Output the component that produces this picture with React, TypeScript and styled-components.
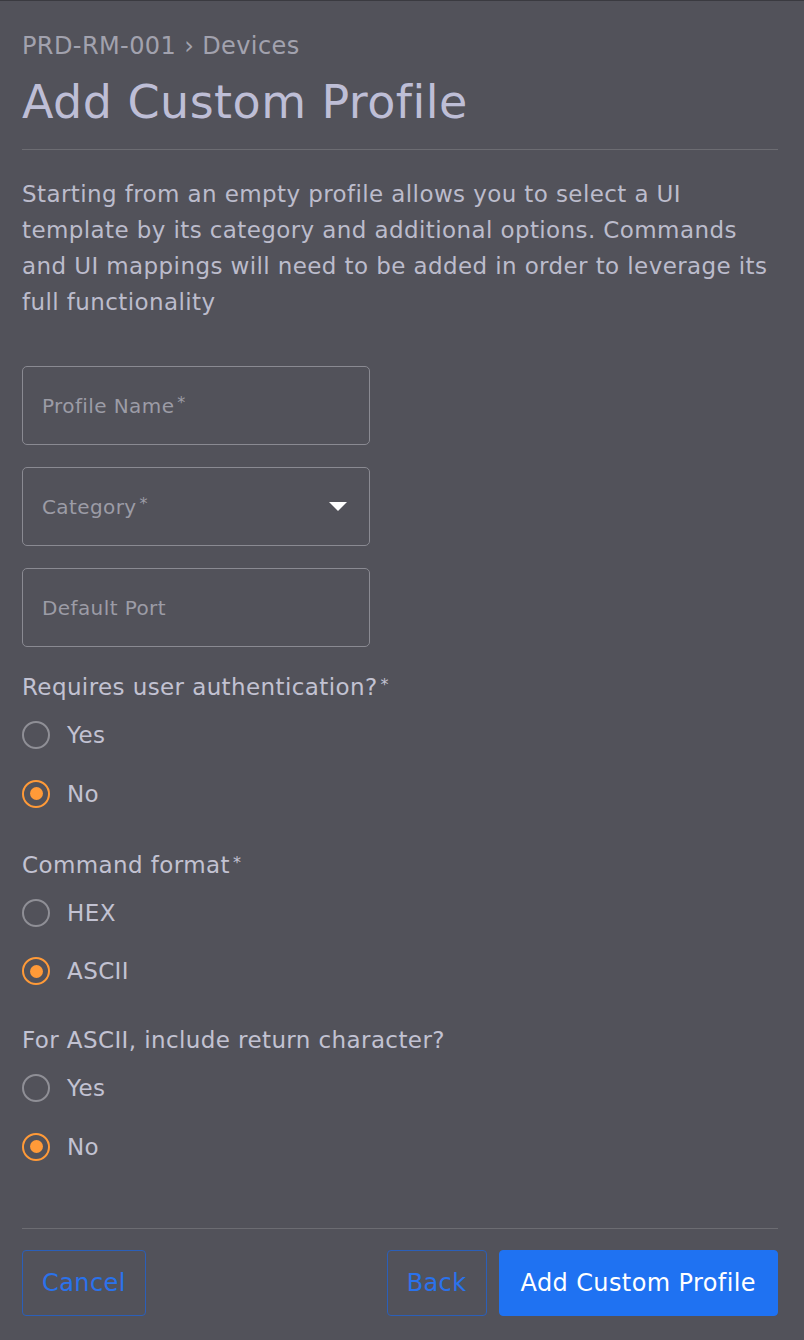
import styled, { createGlobalStyle } from 'styled-components'

const GlobalStyle = createGlobalStyle`
    html, body {
        margin: 0;
        padding: 0;
        background-color: #52525a;
    }
    body {
        font-family: "DejaVu Sans", "Open Sans", sans-serif;
    }
`

const Page = styled.div`
    box-sizing: border-box;
    min-height: 1340px;
    border-top: 1px solid #3a3a40;
    padding: 30px 26px 24px 22px;
    display: flex;
    flex-direction: column;
`

const Breadcrumb = styled.div`
    font-size: 24px;
    line-height: 30px;
    letter-spacing: 0.4px;
    color: #a2a2ae;
`

const Title = styled.h1`
    margin: 11px 0 0;
    font-size: 46px;
    font-weight: 400;
    line-height: 60px;
    letter-spacing: 0.45px;
    color: #bebed6;
`

const Divider = styled.hr<{ gap: string }>`
    border: none;
    border-top: 1px solid #6c6c72;
    margin: ${(p) => p.gap};
`

const Description = styled.p`
    margin: 0;
    font-size: 23px;
    line-height: 36px;
    letter-spacing: 0.4px;
    color: #bcbccc;
`

const Fields = styled.div`
    display: flex;
    flex-direction: column;
    gap: 22px;
    margin-top: 46px;
`

const FieldBox = styled.div`
    box-sizing: border-box;
    width: 348px;
    height: 79px;
    border: 1px solid #8a8a92;
    border-radius: 5px;
    padding: 0 22px 0 19px;
    display: flex;
    align-items: center;
    justify-content: space-between;
`

const Placeholder = styled.span`
    font-size: 20px;
    letter-spacing: 0.4px;
    color: #9c9ca6;
`

const Star = styled.sup`
    font-size: 16px;
    margin-left: 3px;
    vertical-align: 5px;
`

const Caret = styled.span`
    width: 0;
    height: 0;
    border-left: 9px solid transparent;
    border-right: 9px solid transparent;
    border-top: 9px solid #ffffff;
`

const Group = styled.div<{ top: string }>`
    display: flex;
    flex-direction: column;
    margin-top: ${(p) => p.top};
`

const GroupLabel = styled.div`
    font-size: 23px;
    line-height: 30px;
    letter-spacing: 0.4px;
    margin-bottom: 4px;
    color: #c2c2d2;
`

const Option = styled.label`
    display: flex;
    align-items: center;
    gap: 17px;
    height: 58.5px;
    font-size: 23px;
    letter-spacing: 0.4px;
    color: #c2c2d2;
    cursor: pointer;
`

const RadioCircle = styled.span<{ checked: boolean }>`
    box-sizing: border-box;
    width: 28px;
    height: 28px;
    border-radius: 50%;
    border: 2.5px solid ${(p) => (p.checked ? '#ff9a38' : '#8f8f96')};
    display: flex;
    align-items: center;
    justify-content: center;
    &::after {
        content: '';
        width: 13px;
        height: 13px;
        border-radius: 50%;
        background-color: #ff9a38;
        display: ${(p) => (p.checked ? 'block' : 'none')};
    }
`

const Footer = styled.div`
    display: flex;
    align-items: center;
    gap: 12px;
`

const Spacer = styled.div`
    flex: 1;
`

const Button = styled.button<{ primary?: boolean }>`
    box-sizing: border-box;
    height: 66px;
    padding: 0 ${(p) => (p.primary ? '21px' : '19px')};
    border-radius: 4px;
    font-family: inherit;
    font-size: 24px;
    letter-spacing: 0.4px;
    border: 1px solid ${(p) => (p.primary ? '#1f72f2' : '#2b5fb8')};
    background-color: ${(p) => (p.primary ? '#1f72f2' : 'transparent')};
    color: ${(p) => (p.primary ? '#ffffff' : '#2a72ec')};
    cursor: pointer;
`

type RadioGroupProps = {
    label: string
    required?: boolean
    options: string[]
    selected: string
    top: string
}

function RadioGroup({ label, required, options, selected, top }: RadioGroupProps) {
    return (
        <Group top={top}>
            <GroupLabel>
                {label}
                {required && <Star>*</Star>}
            </GroupLabel>
            {options.map((opt) => (
                <Option key={opt}>
                    <RadioCircle checked={opt === selected} />
                    {opt}
                </Option>
            ))}
        </Group>
    )
}

export default function App() {
    return (
        <>
            <GlobalStyle />
            <Page>
                <Breadcrumb>PRD-RM-001 › Devices</Breadcrumb>
                <Title>Add Custom Profile</Title>
                <Divider gap="17px 0 26px" />
                <Description>
                    Starting from an empty profile allows you to select a UI template by its
                    category and additional options. Commands and UI mappings will need to be
                    added in order to leverage its full functionality
                </Description>
                <Fields>
                    <FieldBox>
                        <Placeholder>Profile Name<Star>*</Star></Placeholder>
                    </FieldBox>
                    <FieldBox>
                        <Placeholder>Category<Star>*</Star></Placeholder>
                        <Caret />
                    </FieldBox>
                    <FieldBox>
                        <Placeholder>Default Port</Placeholder>
                    </FieldBox>
                </Fields>
                <RadioGroup top="23px" label="Requires user authentication?" required options={['Yes', 'No']} selected="No" />
                <RadioGroup top="24.5px" label="Command format" required options={['HEX', 'ASCII']} selected="ASCII" />
                <RadioGroup top="24.5px" label="For ASCII, include return character?" options={['Yes', 'No']} selected="No" />
                <Divider gap="52px 0 21px" />
                <Footer>
                    <Button>Cancel</Button>
                    <Spacer />
                    <Button>Back</Button>
                    <Button primary>Add Custom Profile</Button>
                </Footer>
            </Page>
        </>
    )
}
